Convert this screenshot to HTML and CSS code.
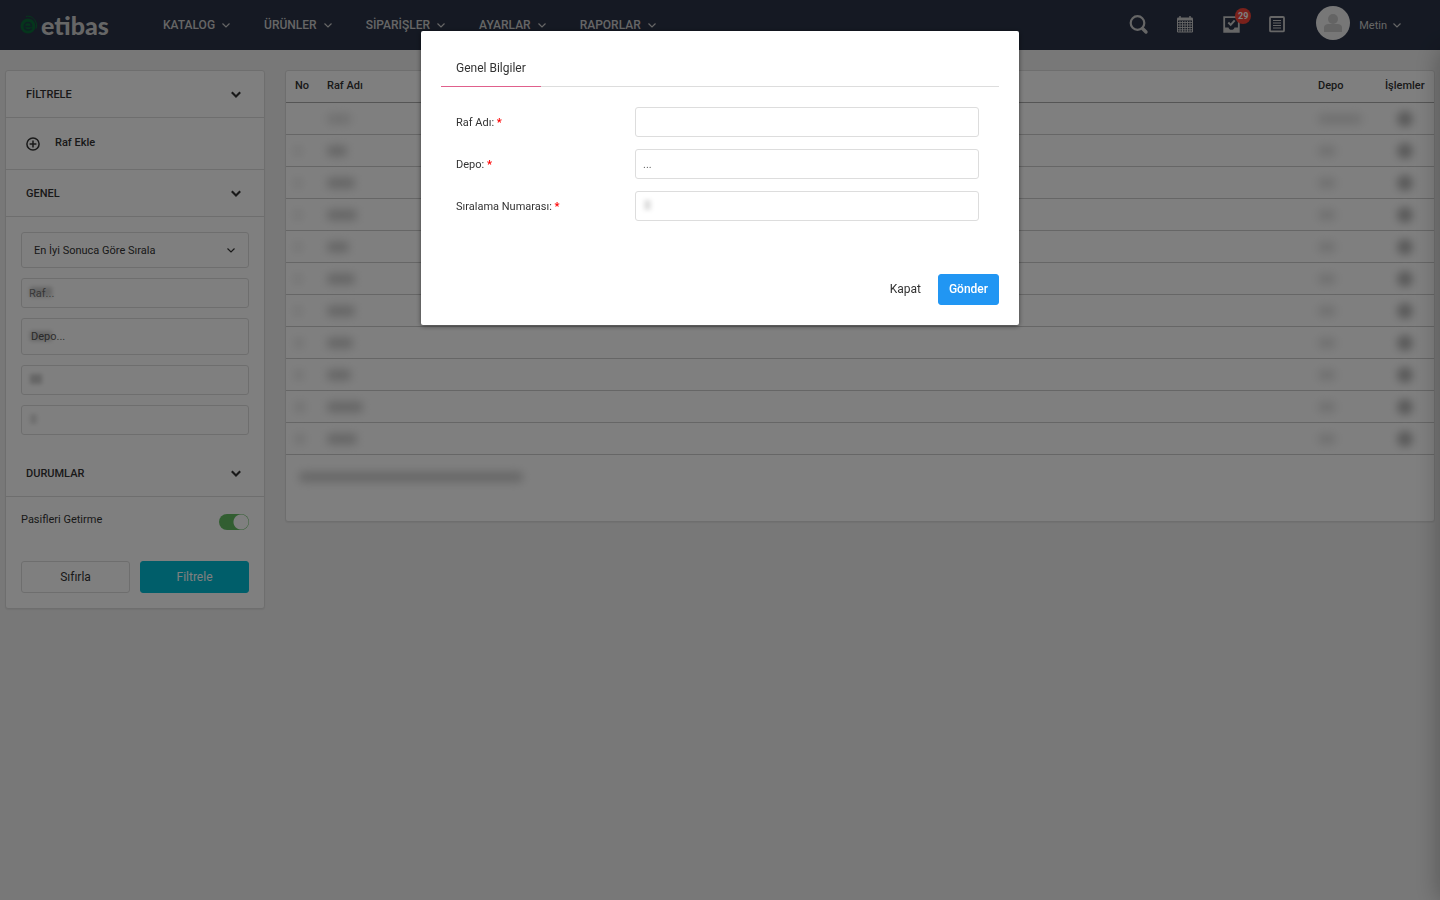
FILE: index.html
```html
<!DOCTYPE html>
<html lang="tr">
<head>
    <meta charset="UTF-8">
    <meta name="viewport" content="width=device-width, initial-scale=1.0">
    <title>etibas</title>
    <link rel="stylesheet" href="styles.css">
</head>
<body>

    <!-- shared icons -->
    <svg class="sprite">
        <symbol id="chevron" viewBox="0 0 10 10">
            <path d="M1.500 3.500l3.500 3.500 3.500-3.500" fill="none" stroke="currentColor"/>
        </symbol>
    </svg>

    <header class="topbar">
        <a class="logo" href="#">
            <svg class="logo-icon" viewBox="0 0 18 20">
                <path d="M6 1.500c4-1 7 1 9 4s2 6 1 8" fill="none" stroke="#0a7038" stroke-width="1"/>
                <circle cx="8" cy="11" r="7.500" fill="#0a6a38"/>
                <path d="M4.500 11.500h7c0-2.500-1.500-4-3.500-4s-3.700 1.600-3.700 3.800S6 15 8.300 15c1.400 0 2.600-.5 3.500-1.500" fill="none" stroke="#1c3f46" stroke-width="1.600"/>
            </svg>
            <span>etibas</span>
        </a>
        <nav class="menu">
            <a href="#">KATALOG <svg class="chev"><use href="#chevron"/></svg></a>
            <a href="#">ÜRÜNLER <svg class="chev"><use href="#chevron"/></svg></a>
            <a href="#">SİPARİŞLER <svg class="chev"><use href="#chevron"/></svg></a>
            <a href="#">AYARLAR <svg class="chev"><use href="#chevron"/></svg></a>
            <a href="#">RAPORLAR <svg class="chev"><use href="#chevron"/></svg></a>
        </nav>
        <div class="tools">
            <button class="tool" aria-label="Ara">
                <svg viewBox="0 0 20 20" fill="none" stroke="currentColor">
                    <circle cx="8.500" cy="8" r="6.800" stroke-width="2.200"/>
                    <path d="M13.500 13.500l3.500 3.500" stroke-width="3.400" stroke-linecap="round"/>
                </svg>
            </button>
            <button class="tool" aria-label="Takvim">
                <svg viewBox="0 0 20 20" fill="none" stroke="currentColor">
                    <path d="M2.500 3.500h15v13.500h-15z"/>
                    <path d="M2.500 4h15" stroke-width="3"/>
                    <path d="M5 1v3M15 1v3" stroke-width="1.500"/>
                    <path d="M3 7.500h14M3 10h14M3 12.500h14M3 14.800h14M5 6v11M7.500 6v11M10 6v11M12.500 6v11M15 6v11" stroke-width="0.900"/>
                </svg>
            </button>
            <button class="tool" aria-label="Görevler">
                <svg viewBox="0 0 20 20" fill="none" stroke="currentColor">
                    <path d="M3.200 2.200h14.600v14.600H3.200z" stroke-width="1.800"/>
                    <path d="M3 12.500h4.500c.3 1.500 1.500 2.300 3 2.300s2.700-.8 3-2.300H18v4.500H3z" fill="currentColor" stroke="none"/>
                    <path d="M7.300 7.500l2.400 2.400 4-4.500" stroke-width="2"/>
                </svg>
                <span class="badge">29</span>
            </button>
            <button class="tool" aria-label="Liste">
                <svg viewBox="0 0 20 20" fill="none" stroke="currentColor">
                    <rect x="3" y="2" width="14" height="14.400" rx="1" stroke-width="1.800"/>
                    <path d="M6 5.500h8M6 8h8M6 10.500h8M6 13h8" stroke-width="1.200"/>
                </svg>
            </button>
            <button class="user">
                <svg class="avatar" viewBox="0 0 34 34">
                    <circle cx="17" cy="17" r="17" fill="#eeeeee"/>
                    <circle cx="17" cy="13" r="5" fill="#c8c8c8"/>
                    <path d="M8 26v-4c0-3 2-4 5-4h8c3 0 5 1 5 4v4z" fill="#c8c8c8"/>
                </svg>
                Metin
                <svg class="chev"><use href="#chevron"/></svg>
            </button>
        </div>
    </header>

    <main class="page">
        <form class="sidebar card">
            <h2 class="head">FİLTRELE <svg class="chev bold"><use href="#chevron"/></svg></h2>
            <a class="add" href="#">
                <svg viewBox="0 0 14 14" fill="none" stroke="currentColor">
                    <circle cx="7" cy="7" r="6.100" stroke-width="1.500"/>
                    <path d="M7 3.600v6.800M3.600 7h6.800" stroke-width="1.500"/>
                </svg>
                <span>Raf Ekle</span>
            </a>
            <h2 class="head">GENEL <svg class="chev bold"><use href="#chevron"/></svg></h2>
            <div class="filters">
                <div class="field">
                    <select class="box tall sort" aria-label="Sıralama">
                        <option>En İyi Sonuca Göre Sırala</option>
                    </select>
                    <svg class="chev"><use href="#chevron"/></svg>
                </div>
                <div class="field smudge wide"><input class="box" type="text" placeholder="Raf..." aria-label="Raf"></div>
                <div class="field smudge wide">
                    <select class="box depot" aria-label="Depo"><option>Depo...</option></select>
                </div>
                <div class="field smudge"><input class="box" type="text" aria-label="En az"></div>
                <div class="field smudge narrow"><input class="box" type="text" aria-label="En çok"></div>
            </div>
            <h2 class="head">DURUMLAR <svg class="chev bold"><use href="#chevron"/></svg></h2>
            <div class="state">
                <label for="pasif">Pasifleri Getirme</label>
                <input class="switch" id="pasif" type="checkbox" checked>
            </div>
            <div class="actions">
                <button class="btn" type="reset">Sıfırla</button>
                <button class="btn cyan" type="button">Filtrele</button>
            </div>
        </form>

        <section class="list card">
            <table>
                <thead>
                    <tr>
                        <th class="no">No</th>
                        <th>Raf Adı</th>
                        <th class="depo">Depo</th>
                        <th class="islem">İşlemler</th>
                    </tr>
                </thead>
                <tbody id="raflar"></tbody>
            </table>
            <div class="summary"><span class="blur"></span></div>
        </section>
    </main>

    <aside class="drawer"></aside>

    <div class="overlay">
        <form class="modal" role="dialog" aria-label="Genel Bilgiler">
            <div class="tabs"><button class="tab" type="button">Genel Bilgiler</button></div>
            <div class="rows">
                <div class="row">
                    <label for="rafAdi">Raf Adı: <b>*</b></label>
                    <div class="field"><input class="box" id="rafAdi" type="text"></div>
                </div>
                <div class="row">
                    <label for="depo">Depo: <b>*</b></label>
                    <div class="field"><select class="box" id="depo"><option>...</option></select></div>
                </div>
                <div class="row">
                    <label for="sira">Sıralama Numarası: <b>*</b></label>
                    <div class="field smudge narrow"><input class="box" id="sira" type="text"></div>
                </div>
            </div>
            <div class="modal-foot">
                <button class="btn plain" type="button">Kapat</button>
                <button class="btn blue" type="button">Gönder</button>
            </div>
        </form>
    </div>

    <script>
        // widths of the hidden values: no, raf, depo
        const raflar = [
            [0, 24, 44], [6, 20, 18], [6, 28, 18], [6, 30, 18], [6, 22, 18], [6, 28, 18],
            [6, 28, 18], [8, 26, 18], [8, 24, 18], [10, 36, 18], [10, 30, 18]
        ];
        const dest = document.querySelector("#raflar");
        raflar.forEach((raf, i) => {
            const tr = document.createElement("tr");
            raf.forEach((w, k) => {
                const soft = k == 1 && i > 0 ? "" : "soft";
                tr.innerHTML += `<td><span class="blur ${soft}" style="width:${w}px"></span></td>`;
            });
            tr.innerHTML += '<td class="islem"><span class="blur dot"></span></td>';
            dest.appendChild(tr);
        });
    </script>
</body>
</html>
```
FILE: styles.css
```css
* {
    box-sizing: border-box;
}

body {
    margin: 0;
    min-height: 100vh;
    background-color: #f0f0f0;
    color: #333;
    font-family: Roboto, "Liberation Sans", sans-serif;
    font-size: 11px;
    line-height: 17px;
    overflow: hidden;
}

a {
    color: inherit;
    text-decoration: none;
}

button,
input,
select {
    font: inherit;
    color: inherit;
}

button {
    border: none;
    padding: 0;
    background: none;
    cursor: pointer;
}

.sprite {
    display: none;
}

.chev {
    width: 10px;
    height: 10px;
    flex: none;
    stroke-width: 1.2;
}

.chev.bold {
    width: 12px;
    height: 12px;
    stroke-width: 1.8;
}

.card {
    background-color: #fff;
    border: 1px solid #ddd;
    border-radius: 3px;
    box-shadow: 0 1px 1px rgba(0, 0, 0, 0.05);
}

/* top bar */
.topbar {
    display: flex;
    align-items: center;
    height: 50px;
    padding: 0 38px 0 20px;
    background-color: #2a3347;
    color: #ccc;
}

.logo {
    display: flex;
    align-items: center;
    gap: 3px;
    width: 143px;
    font-family: Lato, sans-serif;
    font-size: 25px;
    font-weight: 900;
    line-height: 28px;
}

.logo-icon {
    width: 18px;
    height: 20px;
}

.menu {
    display: flex;
    gap: 33px;
    font-size: 12px;
    font-weight: 500;
}

.menu a,
.user {
    display: flex;
    align-items: center;
    gap: 6px;
}

.tools {
    display: flex;
    align-items: center;
    gap: 26px;
    margin-left: auto;
}

.tool {
    position: relative;
    width: 20px;
    height: 20px;
}

.tool svg {
    display: block;
}

.badge {
    position: absolute;
    top: -7px;
    right: -10px;
    width: 16px;
    height: 16px;
    border-radius: 50%;
    background-color: #f44336;
    color: #fff;
    font-size: 9px;
    font-weight: 700;
    line-height: 16px;
}

.user {
    gap: 5px;
    margin-left: 3px;
}

.avatar {
    width: 34px;
    height: 34px;
    margin-right: 4px;
    margin-bottom: 4px;
}

/* page */
.page {
    display: flex;
    align-items: flex-start;
    gap: 20px;
    padding: 20px 5px;
}

.sidebar {
    flex: 0 0 260px;
}

.head {
    display: flex;
    align-items: center;
    justify-content: space-between;
    height: 47px;
    margin: 0;
    padding: 0 22px 0 20px;
    border-bottom: 1px solid #ddd;
    font-size: 11px;
    font-weight: 500;
}

.add {
    display: flex;
    align-items: center;
    gap: 15px;
    height: 52px;
    padding: 0 20px;
    border-bottom: 1px solid #ddd;
    font-weight: 500;
}

.add svg {
    width: 14px;
    height: 14px;
}

.add span {
    padding-bottom: 2px;
}

.filters {
    display: flex;
    flex-direction: column;
    gap: 10px;
    padding: 15px;
}

.field {
    position: relative;
}

.box {
    display: block;
    width: 100%;
    height: 30px;
    padding: 0 7px;
    border: 1px solid #ddd;
    border-radius: 3px;
    background-color: #fff;
    color: #666;
    appearance: none;
}

.box::placeholder {
    color: #888;
}

.box.tall {
    height: 36px;
}

.box.depot {
    height: 37px;
    padding: 0 9px;
}

.box.sort {
    padding: 0 12px;
    color: #333;
}

.field .chev {
    position: absolute;
    top: 13px;
    right: 13px;
}

/* blurred mark over the hidden value */
.smudge::after {
    content: "";
    position: absolute;
    top: 50%;
    left: 9px;
    width: 12px;
    height: 10px;
    margin-top: -6px;
    background-color: rgba(0, 0, 0, 0.2);
    filter: blur(2px);
    pointer-events: none;
}

.smudge.wide::after {
    width: 22px;
}

.smudge.narrow::after {
    width: 7px;
    background-color: rgba(0, 0, 0, 0.12);
}

.state {
    display: flex;
    justify-content: space-between;
    padding: 14px 15px 31px;
}

.state label {
    padding-bottom: 2px;
}

.switch {
    width: 30px;
    height: 16px;
    margin: 3px 0 0;
    border-radius: 8px;
    background: radial-gradient(circle at 22px 8px, #fff 7px, #64bd63 8px);
    appearance: none;
}

.actions {
    display: flex;
    gap: 10px;
    padding: 0 15px 15px;
}

.btn {
    flex: 1;
    height: 32px;
    border: 1px solid #ddd;
    border-radius: 3px;
    font-size: 12px;
}

.btn.cyan {
    border-color: #00bcd4;
    background-color: #00bcd4;
    color: #fff;
}

/* list */
.list {
    flex: 1;
}

table {
    width: 100%;
    border-collapse: separate;
    border-spacing: 0;
    table-layout: fixed;
}

th,
td {
    height: 32px;
    padding: 0 0 0 9px;
    border-bottom: 1px solid #ccc;
    text-align: left;
}

th {
    padding-bottom: 2px;
    border-color: #aaa;
    font-weight: 500;
}

.no {
    width: 32px;
}

.depo {
    width: 67px;
}

.islem {
    width: 58px;
    padding-left: 9px;
}

td.islem {
    padding-left: 21px;
}

.blur {
    display: block;
    height: 10px;
    border-radius: 4px;
    background-color: #c8c8c8;
    filter: blur(5px);
}

.blur.soft {
    background-color: #e0e0e0;
}

.blur.dot {
    width: 16px;
    height: 16px;
    border-radius: 50%;
    background-color: #b4b4b4;
    filter: blur(4px);
}

.summary {
    height: 66px;
    padding: 17px 13px;
}

.summary .blur {
    width: 224px;
    background-color: #ccc;
}

/* closed side panel, only its shadow reaches the page */
.drawer {
    position: fixed;
    top: 50px;
    bottom: 0;
    left: 100%;
    width: 300px;
    box-shadow: 0 0 24px rgba(0, 0, 0, 0.3);
}

/* modal */
.overlay {
    position: fixed;
    inset: 0;
    padding: 31px 20px;
    background-color: rgba(0, 0, 0, 0.5);
}

.modal {
    max-width: 598px;
    margin: 0 auto;
    padding: 20px;
    border-radius: 2px;
    background-color: #fff;
    box-shadow: 0 1px 5px rgba(0, 0, 0, 0.5);
}

.tabs {
    display: flex;
    height: 36px;
    border-bottom: 1px solid #ddd;
}

.tab {
    height: 36px;
    padding: 0 15px;
    border-bottom: 1px solid #e0608c;
    font-size: 12px;
}

.rows {
    display: flex;
    flex-direction: column;
    gap: 12px;
    padding: 20px 20px 53px 15px;
}

.row {
    display: grid;
    grid-template-columns: 179px 1fr;
    align-items: center;
}

.row b {
    color: #f00;
}

.modal-foot {
    display: flex;
    justify-content: flex-end;
    gap: 6px;
}

.modal-foot .btn {
    flex: none;
    height: 31px;
    padding: 0 10px 1px;
}

.btn.plain {
    border-color: transparent;
}

.btn.blue {
    border-color: #2196f3;
    background-color: #2196f3;
    color: #fff;
    font-weight: 500;
}
```
